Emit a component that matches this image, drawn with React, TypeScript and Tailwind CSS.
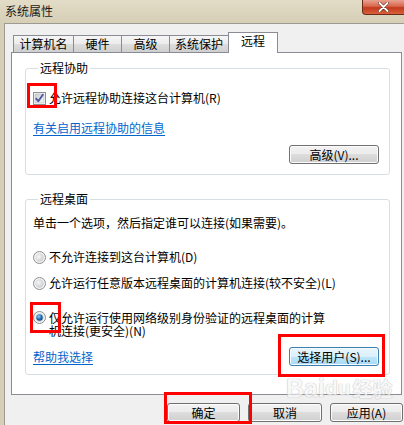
import React from "react";

const font = { fontFamily: '"Noto Sans CJK SC", "Noto Sans", sans-serif' };

function Checkbox() {
  return (
    <svg width="13" height="13" viewBox="0 0 13 13" className="shrink-0">
      <defs>
        <linearGradient id="cbg" x1="0" y1="0" x2="1" y2="1">
          <stop offset="0" stopColor="#cbcfd5" />
          <stop offset="1" stopColor="#f4f4f4" />
        </linearGradient>
      </defs>
      <rect x="0.5" y="0.5" width="12" height="12" fill="#fff" stroke="#8e8f8f" />
      <rect x="2" y="2" width="9" height="9" fill="url(#cbg)" stroke="#b0b4bb" strokeWidth="0.6" />
      <path d="M3.2 6.6 L5.3 9.2 L9.8 2.8" fill="none" stroke="#4a5799" strokeWidth="1.8" strokeLinecap="round" strokeLinejoin="round" />
    </svg>
  );
}

function Radio({ checked }: { checked?: boolean }) {
  return (
    <svg width="13" height="13" viewBox="0 0 13 13" className="shrink-0">
      <defs>
        <radialGradient id="rg" cx="0.4" cy="0.4" r="0.7">
          <stop offset="0" stopColor="#f6f6f6" />
          <stop offset="1" stopColor="#c6c8cc" />
        </radialGradient>
        <radialGradient id="rd" cx="0.4" cy="0.35" r="0.7">
          <stop offset="0" stopColor="#8fd0f5" />
          <stop offset="0.6" stopColor="#1f6cb8" />
          <stop offset="1" stopColor="#0d3f79" />
        </radialGradient>
      </defs>
      <circle cx="6.5" cy="6.5" r="6" fill="#f4f4f4" stroke="#8d8d8d" />
      <circle cx="6.5" cy="6.5" r="4.2" fill="url(#rg)" />
      {checked && <circle cx="6.5" cy="6.5" r="3.2" fill="url(#rd)" />}
    </svg>
  );
}

const btnNormal =
  "flex items-center justify-center rounded-[3px] border border-[#707070] bg-[linear-gradient(to_bottom,#f2f2f2_0%,#ebebeb_50%,#dddddd_50%,#cfcfcf_100%)] shadow-[inset_0_0_0_1px_#fcfcfc] text-[12px] leading-none text-black";
const btnHot =
  "flex items-center justify-center rounded-[3px] border border-[#3c7fb1] bg-[linear-gradient(to_bottom,#eaf6fd_0%,#d9f0fc_50%,#bee6fd_50%,#a7d9f5_100%)] shadow-[inset_0_0_0_1px_#f4fbfe] text-[12px] leading-none text-black";

function Tab({ label, w, selected }: { label: string; w: string; selected?: boolean }) {
  if (selected) {
    return (
      <div
        className={`${w} h-[21px] -mb-px relative z-10 border border-b-0 border-[#898c95] bg-white flex items-start justify-center pt-[1px] text-[12px] leading-[14px]`}
      >
        {label}
      </div>
    );
  }
  return (
    <div
      className={`${w} h-[17px] -mr-px border border-b-0 border-[#898c95] bg-[linear-gradient(to_bottom,#f6f6f6_0%,#ebebeb_50%,#dddddd_51%,#cfcfcf_100%)] flex items-start justify-center pt-[1px] text-[12px] leading-[14px]`}
    >
      {label}
    </div>
  );
}

export default function App() {
  return (
    <div className="relative w-[404px] h-[425px] overflow-hidden bg-[#d6ceb6] text-black" style={font}>
      {/* Title bar */}
      <div className="h-[23px] flex items-start justify-between bg-[linear-gradient(to_bottom,#e3dcc7,#d6ceb5)]">
        <div className="pl-[5px] pt-[3px] text-[12px] leading-[16px] text-[#1a1a1a]">系统属性</div>
        <div className="w-[42px] h-[15px] rounded-bl-[4px] border border-t-0 border-r-0 border-[#6b2a1c] bg-[linear-gradient(to_bottom,#e8a291_0%,#d8664b_45%,#c2391b_55%,#d9613c_100%)] flex items-center justify-center">
          <svg width="11" height="10" viewBox="0 0 11 10">
            <path d="M1.5 1 L9.5 9 M9.5 1 L1.5 9" stroke="#5a2a20" strokeWidth="3" strokeLinecap="round" />
            <path d="M1.5 1 L9.5 9 M9.5 1 L1.5 9" stroke="#ffffff" strokeWidth="1.8" strokeLinecap="round" />
          </svg>
        </div>
      </div>

      {/* Client area */}
      <div className="ml-[4px] h-[402px] border-l border-t border-[#9c9a92] bg-[#f0f0f0] flex flex-col">
        {/* Tabs */}
        <div className="pl-[8px] pt-[7px] flex items-end h-[28px]">
          <Tab label="计算机名" w="w-[61px]" />
          <Tab label="硬件" w="w-[49px]" />
          <Tab label="高级" w="w-[49px]" />
          <Tab label="系统保护" w="w-[60px]" />
          <Tab label="远程" w="w-[50px]" selected />
        </div>

        {/* Panel */}
        <div className="ml-[6px] w-[391px] h-[343px] border border-[#898c95] bg-white pl-[13px] pr-[11px] pt-[8px]">
          {/* Group 1 */}
          <fieldset className="border border-[#d5dfe5] rounded-[3px] pl-[7px] pr-[10px] pb-[10px]">
            <legend className="ml-[5px] px-[2px] text-[12px] leading-[14px]">远程协助</legend>
            <div className="mt-[16px] h-[14px] flex items-center gap-[3px] text-[12px] leading-[14px]">
              <Checkbox />
              <span>允许远程协助连接这台计算机(R)</span>
            </div>
            <div className="mt-[16px] h-[14px] text-[12px] leading-[14px] text-[#0066cc] underline underline-offset-2">
              有关启用远程协助的信息
            </div>
            <div className="mt-[10px] flex justify-end">
              <div className={`${btnNormal} w-[90px] h-[19px]`}>高级(V)...</div>
            </div>
          </fieldset>

          {/* Group 2 */}
          <fieldset className="mt-[17px] border border-[#d5dfe5] rounded-[3px] pl-[7px] pr-[10px] pb-[8px]">
            <legend className="ml-[5px] px-[2px] text-[12px] leading-[14px]">远程桌面</legend>
            <div className="mt-[10px] h-[14px] text-[12px] leading-[14px]">
              单击一个选项，然后指定谁可以连接(如果需要)。
            </div>
            <div className="mt-[20px] h-[14px] flex items-center gap-[3px] text-[12px] leading-[14px]">
              <Radio />
              <span>不允许连接到这台计算机(D)</span>
            </div>
            <div className="mt-[12px] h-[14px] flex items-center gap-[3px] text-[12px] leading-[14px]">
              <Radio />
              <span className="whitespace-nowrap">允许运行任意版本远程桌面的计算机连接(较不安全)(L)</span>
            </div>
            <div className="mt-[21px] flex items-start gap-[3px] text-[12px] leading-[13px]">
              <Radio checked />
              <span className="w-[282px]">仅允许运行使用网络级别身份验证的远程桌面的计算机连接(更安全)(N)</span>
            </div>
            <div className="mt-[10px] flex items-center justify-between">
              <span className="text-[12px] leading-[14px] text-[#0066cc] underline underline-offset-2">帮助我选择</span>
              <div className={`${btnHot} w-[90px] h-[19px]`}>选择用户(S)...</div>
            </div>
          </fieldset>
        </div>

        {/* Bottom buttons */}
        <div className="mt-[8px] flex justify-end gap-[8px] pr-[1px]">
          <div className={`${btnNormal} w-[73px] h-[19px]`}>确定</div>
          <div className={`${btnNormal} w-[74px] h-[19px]`}>取消</div>
          <div className={`${btnNormal} w-[73px] h-[19px]`}>应用(A)</div>
        </div>
      </div>

      {/* Watermark */}
      <div className="pointer-events-none absolute left-[286px] top-[375px] opacity-70">
        <div
          className="flex items-end text-[25px] leading-[26px] font-bold text-[#f6f6f6] [text-shadow:0_0_1px_#aaaaaa,0_0_1px_#aaaaaa]"
          style={{ fontFamily: '"Liberation Sans", "Noto Sans CJK SC", sans-serif' }}
        >
          <span>Bai</span>
          <span className="text-[21px]">du</span>
          <span className="ml-[2px] text-[20px] leading-[24px]" style={font}>经验</span>
        </div>
      </div>

      {/* Red highlight boxes */}
      <div className="pointer-events-none absolute left-[27px] top-[83px] w-[30px] h-[25px] border-[3px] border-[#ff0000]" />
      <div className="pointer-events-none absolute left-[30px] top-[302px] w-[31px] h-[31px] border-[3px] border-[#ff0000]" />
      <div className="pointer-events-none absolute left-[278px] top-[334px] w-[107px] h-[43px] border-[3px] border-[#ff0000]" />
      <div className="pointer-events-none absolute left-[164px] top-[392px] w-[88px] h-[32px] border-[3px] border-[#ff0000]" />
    </div>
  );
}
